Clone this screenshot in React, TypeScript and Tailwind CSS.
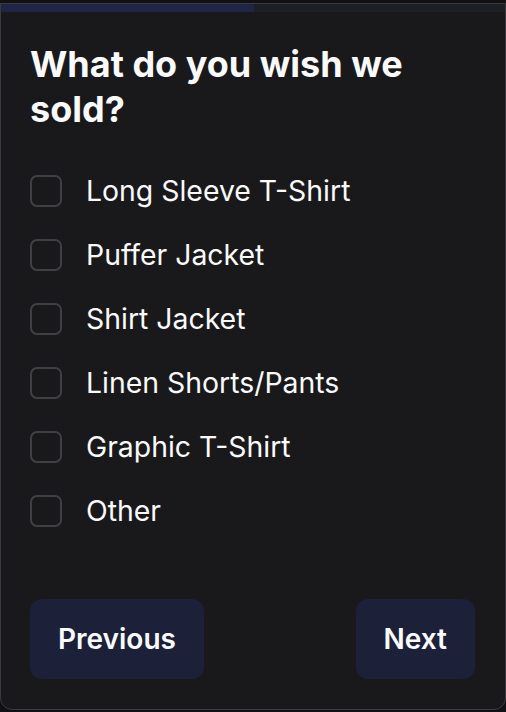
import React from "react";

const options = [
  "Long Sleeve T-Shirt",
  "Puffer Jacket",
  "Shirt Jacket",
  "Linen Shorts/Pants",
  "Graphic T-Shirt",
  "Other",
];

export default function App() {
  return (
    <div
      className="w-[506px] h-[712px] bg-[#111113] pt-[3px]"
      style={{ fontFamily: "Inter, 'Noto Sans', sans-serif" }}
    >
      <div className="h-[707px] bg-[#19191c] border border-[#3a3a40] rounded-b-[12px] flex flex-col overflow-hidden">
        <div className="h-[8px] w-full bg-[#1e1f26]">
          <div className="h-full w-[253px] bg-[#1f2546]" />
        </div>
        <div className="flex flex-col pl-[29px] pr-[30px] pt-[30px] flex-1">
          <h1 className="text-[36px] leading-[45px] font-bold text-[#fafafa]">
            What do you wish we sold?
          </h1>
          <div className="flex flex-col gap-[32px] mt-[43px]">
            {options.map((o) => (
              <label key={o} className="flex items-center gap-[24px] h-[32px]">
                <span className="w-[32px] h-[32px] rounded-[7px] border-2 border-[#3f3f46] shrink-0" />
                <span className="text-[28.4px] text-[#fafafa] leading-[32px]">{o}</span>
              </label>
            ))}
          </div>
          <div className="flex justify-between mt-[72px]">
            <button className="h-[80px] px-[28px] rounded-[12px] bg-[#1c2039] text-[#fafafa] text-[28px] font-semibold">
              Previous
            </button>
            <button className="h-[80px] px-[28px] rounded-[12px] bg-[#1c2039] text-[#fafafa] text-[28px] font-semibold">
              Next
            </button>
          </div>
        </div>
      </div>
    </div>
  );
}
